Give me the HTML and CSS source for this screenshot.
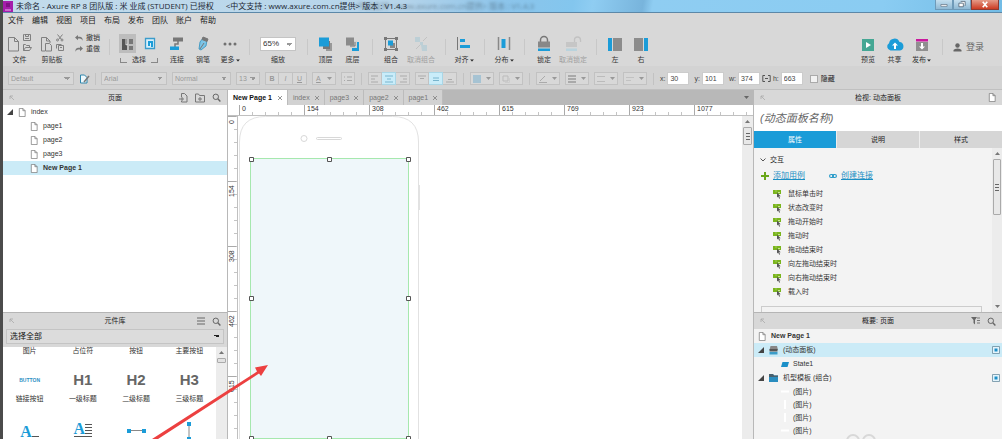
FILE: index.html
```html
<!DOCTYPE html>
<html lang="zh-CN">
<head>
<meta charset="utf-8">
<title>未命名 - Axure RP 8</title>
<link rel="stylesheet" href="styles.css">
</head>
<body>
<svg class="defs" aria-hidden="true">
  <symbol id="page" viewBox="0 0 8 10"><path d="M1 .5h4L7.5 3v6.5H1zM5 .5V3h2.5" fill="#fff" stroke="#777" stroke-width=".8"/></symbol>
  <symbol id="search" viewBox="0 0 9 9"><circle cx="3.8" cy="3.8" r="2.7" fill="none" stroke="#666"/><path d="M5.8 5.8 8.4 8.4" stroke="#666" stroke-width="1.4"/></symbol>
  <symbol id="pin" viewBox="0 0 6 6"><path d="M1 4V1h3M1 1l4 4" fill="none" stroke="#aaa" stroke-width=".8"/></symbol>
  <symbol id="tri" viewBox="0 0 6 6"><path d="M6 0v6H0z" fill="#444"/></symbol>
  <symbol id="event" viewBox="0 0 9 9"><path d="M0 0h8v4H0z" fill="#7ab51d"/><path d="M3 .5v1M5 2.500h2" stroke="#d9efb0" stroke-width=".8"/><path d="M4 2.500v5l1.200-1 1 2.200.9-.5-1-2h1.600z" fill="#555"/></symbol>
  <symbol id="close" viewBox="0 0 6 6"><path d="M1 1l4 4M5 1 1 5" stroke="#888" stroke-width=".9"/></symbol>
  <symbol id="state" viewBox="0 0 8 8"><path d="M.5.5h7v7h-7z" fill="#e4f4fb" stroke="#6a8da0" stroke-width=".8"/><path d="M2.500 2.500h3v3h-3z" fill="#1b8fc8"/></symbol>
  <symbol id="up" viewBox="0 0 5 3"><path d="M0 3 2.500 0 5 3z" fill="#777"/></symbol>
  <symbol id="down" viewBox="0 0 5 3"><path d="M0 0h5L2.500 3z" fill="currentColor"/></symbol>
</svg>

<div class="app">
  <header class="titlebar">
    <svg class="logo" viewBox="0 0 10 11"><path d="M0 0h10v11H0z" fill="#a51dab"/><path d="M2 9h6" stroke="#efb4f0"/><path d="M3 2h4v4H3z" fill="#7f1286"/></svg>
    <h1>未命名 - Axure RP 8 团队版 : 米 业成 (STUDENT) 已授权</h1>
    <span class="support">&lt;中文支持 : www.axure.com.cn提供&gt; 版本 : V1.4.3</span>
    <div class="winbtns">
      <button class="win" aria-label="最小化"><svg viewBox="0 0 18 10"><path d="M5.500 5h7v2h-7z" fill="#fff" stroke="#567" stroke-width=".7"/></svg></button>
      <button class="win" aria-label="还原"><svg viewBox="0 0 18 10"><path d="M7.500 1.500h5v5M5.500 3.500h5v4h-5z" fill="#fff" stroke="#456" stroke-width=".8"/></svg></button>
      <button class="win shut" aria-label="关闭"><svg viewBox="0 0 28 10"><path d="m11.500 2 5 6m0-6-5 6" stroke="#fff" stroke-width="1.800"/></svg></button>
    </div>
  </header>

  <nav class="menu">
    <button>文件</button><button>编辑</button><button>视图</button><button>项目</button><button>布局</button><button>发布</button><button>团队</button><button>账户</button><button>帮助</button>
  </nav>

  <div class="toolbar">
    <button class="tool"><svg width="26" height="20" viewBox="0 0 26 20" fill="none" stroke="#808080"><path d="M1.500 3.500h6l4 4v9.500h-10zM7.500 3.500v4h4M17.500.500h6v6h-7v-6zM18.500.500v2h3v-2M18 4.500h4M16.500 16.500v-6h2l1 1h3v2M16.500 16.500l2-3h6l-2 3z"/></svg><span>文件</span></button>
    <button class="tool"><svg width="26" height="20" viewBox="0 0 26 20" fill="none" stroke="#808080"><path d="M6 17H2.500V3.500h5l3.500 3.500v2M7.500 3.500v3.500H11M6.500 9.500h4l2 2V17h-6zM18.500.500l4 5M23.500.500l-4 5"/><circle cx="18.500" cy="6" r="1"/><circle cx="23" cy="6" r="1"/><path d="M17.500 14.500v-4h5M19.500 11.500h5v5h-5zM21 13.500h2"/></svg><span>剪贴板</span></button>
    <div class="undo">
      <button><svg width="8" height="7" viewBox="0 0 8 7"><path d="M0 2.500 3 0v1.800h2q3 .5 2.500 4Q7 4 5 3.600H3v1.600z" fill="#777"/></svg>撤销</button>
      <button><svg width="8" height="7" viewBox="0 0 8 7"><path d="M8 2.500 5 0v1.800H3Q0 2.300.5 5.800 1 4 3 3.600h2v1.600z" fill="#777"/></svg>重做</button>
    </div>
    <i class="sep"></i>
    <button class="tool"><svg width="42" height="20" viewBox="0 0 42 20"><path d="M1 0h17v19H1z" fill="#bdbdbd"/><path d="M4 5h5v11H4z" fill="#555"/><path d="M11 5h4v5h-4zM11 12h4v4h-4z" fill="#777"/><path d="M8 5v6l2-1" fill="none" stroke="#ddd"/><path d="M27.500 4.500h9v10h-9z" fill="#d9f0fb" stroke="#3b9ccb" stroke-width="1.300"/><path d="M30 7h5v6h-2V9h-1v3h-2z" fill="#1b9cd8"/></svg><span class="pick">选择</span></button>
    <button class="tool"><svg width="16" height="20" viewBox="0 0 16 20"><path d="M4 3.500h10v4H4z" fill="#777"/><path d="M9 7v3H6v3" fill="none" stroke="#777" stroke-width="1.500"/><path d="M1 12.500h9v3.500H1z" fill="#1b9cd8"/></svg><span>连接</span></button>
    <button class="tool"><svg width="16" height="20" viewBox="0 0 16 20"><path d="m8 4 4 2-1 6-5 4-2-1 1-7z" fill="#7cc4e6" stroke="#2d8fbd" stroke-width=".8"/><path d="m8 3 5 2-1 2.500-5-2zM5 15l4-6" fill="#777" stroke="#777"/></svg><span>钢笔</span></button>
    <button class="tool"><svg width="16" height="20" viewBox="0 0 16 20" fill="#707070"><circle cx="3" cy="10" r="1.500"/><circle cx="8" cy="10" r="1.500"/><circle cx="13" cy="10" r="1.500"/></svg><span>更多<svg width="4" height="3" viewBox="0 0 5 3"><use href="#down"/></svg></span></button>
    <i class="sep"></i>
    <div class="tool"><select class="zoom" id="zoom"><option>65%</option></select><label for="zoom">缩放</label></div>
    <i class="sep"></i>
    <button class="tool"><svg width="16" height="20" viewBox="0 0 16 20"><path d="M8 9h6v8H8z" fill="#999"/><path d="M5 7h7v8H5z" fill="#777"/><path d="M1 3.500h10v9H1z" fill="#1b9cd8"/></svg><span>顶层</span></button>
    <button class="tool"><svg width="16" height="20" viewBox="0 0 16 20"><path d="M8 8h6v9H7v-4h1z" fill="#1b9cd8"/><path d="M5 7h7v7H5z" fill="#d0d0d0"/><path d="M1 3.500h8v8H1z" fill="#8b8b8b"/><path d="M5 12h5V8" fill="none" stroke="#777"/></svg><span>底层</span></button>
    <i class="sep"></i>
    <button class="tool"><svg width="16" height="20" viewBox="0 0 16 20"><path d="M2.500 4.500h11v11h-11z" fill="none" stroke="#777"/><path d="M1 3h3v3H1zM12 3h3v3h-3zM1 14h3v3H1zM12 14h3v3h-3z" fill="#777"/><path d="M7 9h5v5H7z" fill="#888"/><path d="M5 6.500h5v5H5z" fill="#1b9cd8"/></svg><span>组合</span></button>
    <button class="tool off"><svg width="16" height="20" viewBox="0 0 16 20"><path d="M2 3h5v5h3v3H7V8H2zM8 11h6v6H9z" fill="#bccfd6"/><path d="m10 7 4-4M3 15l4-4" stroke="#c2c2c2"/></svg><span>取消组合</span></button>
    <i class="sep"></i>
    <button class="tool"><svg width="16" height="20" viewBox="0 0 16 20"><path d="M1.500 3v13" stroke="#777"/><path d="M4 5h5v3H4zM4 11h10v3H4z" fill="#1b9cd8"/></svg><span>对齐<svg width="4" height="3" viewBox="0 0 5 3"><use href="#down"/></svg></span></button>
    <i class="sep"></i>
    <button class="tool"><svg width="16" height="20" viewBox="0 0 16 20"><path d="M2.500 3v13M13.500 3v13" stroke="#888" stroke-width="1.500"/><path d="M5.500 5h4v9h-4z" fill="#1b9cd8"/></svg><span>分布<svg width="4" height="3" viewBox="0 0 5 3"><use href="#down"/></svg></span></button>
    <i class="sep"></i>
    <button class="tool"><svg width="16" height="20" viewBox="0 0 16 20"><path d="M4.500 9V6a3.500 3.500 0 0 1 7 0v3" fill="none" stroke="#777" stroke-width="1.500"/><path d="M2 7.500h12v6H2z" fill="#888"/><path d="M2 14.500h12V17H2z" fill="#1b9cd8"/></svg><span>锁定</span></button>
    <button class="tool off"><svg width="18" height="20" viewBox="0 0 18 20"><path d="M10.500 8V6a3 3 0 0 1 6 0v2" fill="none" stroke="#c2c2c2" stroke-width="1.300"/><path d="M2 8h11v5H2z" fill="#c6c6c6"/><path d="M2 14.500h11V17H2z" fill="#b9d3dd"/></svg><span>取消锁定</span></button>
    <i class="sep"></i>
    <button class="tool"><svg width="16" height="20" viewBox="0 0 16 20"><path d="M1 4h4v13H1z" fill="#1b9cd8"/><path d="M6 4h9v13H6z" fill="#8c8c8c"/></svg><span>左</span></button>
    <button class="tool"><svg width="16" height="20" viewBox="0 0 16 20"><path d="M11 4h4v13h-4z" fill="#1b9cd8"/><path d="M1 4h9v13H1z" fill="#8c8c8c"/></svg><span>右</span></button>
    <i></i>
    <button class="tool"><svg width="16" height="20" viewBox="0 0 16 20"><path d="M2 5h12v12H2z" fill="#45a794"/><path d="m6 8 5 3-5 3z" fill="#fff"/></svg><span>预览</span></button>
    <button class="tool"><svg width="18" height="20" viewBox="0 0 18 20"><path d="M4.500 16.500A4 4 0 0 1 3 9.200 5.500 5.500 0 0 1 13.500 8 4.300 4.300 0 0 1 14 16.500z" fill="#1b9cd8"/><path d="m9 8.500 3 3h-2V15H8v-3.500H6z" fill="#fff"/></svg><span>共享</span></button>
    <button class="tool"><svg width="16" height="20" viewBox="0 0 16 20"><path d="M2 5h12v2.500H2z" fill="#c9199d"/><path d="M2 8h12v9H2z" fill="#8f8f8f"/><path d="m8 15.500-3-3h2V9h2v3.500h2z" fill="#fff"/></svg><span>发布<svg width="4" height="3" viewBox="0 0 5 3"><use href="#down"/></svg></span></button>
    <i class="sep"></i>
    <button class="login"><svg width="9" height="9" viewBox="0 0 9 9" fill="#666"><circle cx="4.500" cy="2.500" r="2.200"/><path d="M.5 8.500V7q1-1.500 4-1.500T8.500 7v1.500z"/></svg>登录</button>
  </div>

  <div class="stylebar">
    <select class="w65" aria-label="样式"><option>Default</option></select>
    <button class="plain" aria-label="编辑样式"><svg width="11" height="10" viewBox="0 0 11 10"><path d="M1.500 1h4L8 3.500V9H1.500z" fill="#eef8fc" stroke="#2f86ad"/><path d="m5 8 5-6" stroke="#777" stroke-width="1.500"/></svg></button>
    <i class="bar"></i>
    <select class="w65" aria-label="字体"><option>Arial</option></select>
    <select class="w58" aria-label="字形"><option>Normal</option></select>
    <select class="w24" aria-label="字号"><option>13</option></select>
    <div class="set"><button><b>B</b></button><button><em>I</em></button><button><u>U</u></button></div>
    <button class="drop"><u>A</u><svg width="5" height="3"><use href="#down"/></svg></button>
    <button class="one" aria-label="列表"><svg width="8" height="8" viewBox="0 0 8 8" stroke="#aaa"><path d="M0 2h1M3 2h5M0 5.500h1M3 5.500h5"/></svg></button>
    <i class="bar wide"></i>
    <div class="set">
      <button aria-label="左对齐"><svg width="8" height="8" viewBox="0 0 8 8" stroke="#aaa"><path d="M0 1h7M0 4h4M0 7h7"/></svg></button>
      <button class="on" aria-label="居中"><svg width="8" height="8" viewBox="0 0 8 8" stroke="#78b5ce"><path d="M0 1h8M2 4h4M0 7h8"/></svg></button>
      <button aria-label="右对齐"><svg width="8" height="8" viewBox="0 0 8 8" stroke="#aaa"><path d="M1 1h7M4 4h4M1 7h7"/></svg></button>
    </div>
    <div class="set">
      <button aria-label="顶部"><svg width="8" height="8" viewBox="0 0 8 8" stroke="#aaa"><path d="M0 1h8M2 3.500h4"/></svg></button>
      <button class="on" aria-label="中部"><svg width="8" height="8" viewBox="0 0 8 8" stroke="#78b5ce"><path d="M1 3h6M1 5.500h6"/></svg></button>
      <button aria-label="底部"><svg width="8" height="8" viewBox="0 0 8 8" stroke="#aaa"><path d="M2 4.500h4M0 7h8"/></svg></button>
    </div>
    <i class="bar wide"></i>
    <button class="drop" aria-label="填充"><svg width="8" height="8"><path d="M0 0h8v8H0z" fill="#a6c3d3"/></svg><svg width="5" height="3"><use href="#down"/></svg></button>
    <button class="drop" aria-label="阴影"><svg width="8" height="8"><path d="M1 1h5v5H1z" fill="none" stroke="#bbb"/><path d="M3 7.500h4.500V3" fill="none" stroke="#ccc"/></svg><svg width="5" height="3"><use href="#down"/></svg></button>
    <i class="bar wide"></i>
    <button class="drop" aria-label="线色"><svg width="8" height="8"><path d="m1 6 5-5M0 7.500h8" stroke="#aaa"/></svg><svg width="5" height="3"><use href="#down"/></svg></button>
    <button class="drop" aria-label="线宽"><svg width="8" height="8"><path d="M0 1h8M0 4h8M0 7h8" stroke="#999" stroke-width="1.500"/></svg><svg width="5" height="3"><use href="#down"/></svg></button>
    <button class="drop" aria-label="线型"><svg width="8" height="8"><path d="M0 1.500h8M0 6.500h8" stroke="#bbb"/></svg><svg width="5" height="3"><use href="#down"/></svg></button>
    <button class="drop" aria-label="箭头"><svg width="8" height="8"><path d="M0 2.500h8M0 5.500h5" stroke="#c2c2c2"/></svg><svg width="5" height="3"><use href="#down"/></svg></button>
    <i class="bar wide"></i>
    <label class="num">x:<input value="30"></label>
    <label class="num">y:<input value="101"></label>
    <label class="num">w:<input value="374"></label>
    <label class="num tight"><svg width="9" height="7" viewBox="0 0 9 7"><path d="M3 .5H.8v6H3M6 .5h2.200v6H6M3 3.500h3" fill="none" stroke="#555"/></svg>h:<input value="663"></label>
    <label class="hide"><input type="checkbox">隐藏</label>
  </div>

  <main class="work">
    <aside class="left">
      <section class="pages">
        <div class="head"><svg width="6" height="6"><use href="#pin"/></svg><h2>页面</h2>
          <span class="acts"><button aria-label="添加页面"><svg width="9" height="10" viewBox="0 0 9 10" fill="none" stroke="#777"><path d="M2.500 4V.5h3l2.500 2.500v6H2.500V8M0 6h5M3 4v4"/></svg></button><button aria-label="添加文件夹"><svg width="10" height="10" viewBox="0 0 10 10" fill="none" stroke="#777"><path d="M.5 9V1h3l1 1.500h5V9zM3 6h4M5 4v4"/></svg></button><button aria-label="搜索"><svg width="9" height="9"><use href="#search"/></svg></button></span>
        </div>
        <ul class="tree">
          <li class="root"><svg width="6" height="6"><use href="#tri"/></svg><svg width="8" height="9"><use href="#page"/></svg>index</li>
          <li><svg width="8" height="9"><use href="#page"/></svg>page1</li>
          <li><svg width="8" height="9"><use href="#page"/></svg>page2</li>
          <li><svg width="8" height="9"><use href="#page"/></svg>page3</li>
          <li class="cur"><svg width="8" height="9"><use href="#page"/></svg>New Page 1</li>
        </ul>
      </section>
      <section class="library">
        <div class="head"><svg width="6" height="6"><use href="#pin"/></svg><h2>元件库</h2>
          <span class="acts"><button aria-label="菜单"><svg width="8" height="8" viewBox="0 0 8 8" stroke="#666"><path d="M0 1h8M0 4h8M0 7h8"/></svg></button><button aria-label="搜索"><svg width="9" height="9"><use href="#search"/></svg></button></span>
        </div>
        <div class="chooser"><select aria-label="元件库"><option>选择全部</option></select></div>
        <div class="shelf">
          <div class="widgets">
            <span>图片</span><span>占位符</span><span>按钮</span><span>主要按钮</span>
            <b class="link">BUTTON</b><b>H1</b><b>H2</b><b>H3</b>
            <span>链接按钮</span><span>一级标题</span><span>二级标题</span><span>三级标题</span>
            <div class="glyph"><strong>A</strong><svg width="7" height="14"><path d="M0 12.500h7" stroke="#555"/></svg></div>
            <div class="para"><div class="glyph"><strong>A</strong><svg width="7" height="12" stroke="#555"><path d="M0 1.500h7M0 4.500h7M0 7.500h7M0 10.500h7"/></svg></div><svg width="18" height="6" stroke="#555"><path d="M0 1.500h18M0 4.500h18"/></svg></div>
            <svg width="20" height="18" viewBox="0 0 20 18"><path d="M3 8.500h14" stroke="#888"/><path d="M1 7h4v4H1zM16 7h4v4h-4z" fill="#1b9cd8"/></svg>
            <svg width="8" height="20" viewBox="0 0 8 20"><path d="M4 3v14" stroke="#888"/><path d="M2 1h4v4H2zM2 16h4v4H2z" fill="#1b9cd8"/></svg>
          </div>
          <div class="scroll"><svg width="5" height="3"><use href="#up"/></svg><i class="thumb small"></i></div>
        </div>
      </section>
    </aside>

    <section class="center">
      <div class="tabs">
        <button class="sel">New Page 1<svg width="6" height="6"><use href="#close"/></svg></button>
        <button>index<svg width="6" height="6"><use href="#close"/></svg></button>
        <button>page3<svg width="6" height="6"><use href="#close"/></svg></button>
        <button>page2<svg width="6" height="6"><use href="#close"/></svg></button>
        <button>page1<svg width="6" height="6"><use href="#close"/></svg></button>
        <svg class="more" width="5" height="3"><use href="#down"/></svg>
      </div>
      <div class="hruler"><span>0</span><span>154</span><span>308</span><span>462</span><span>615</span><span>769</span><span>923</span><span>1077</span></div>
      <div class="stage">
        <div class="vruler"><span>0</span><span>154</span><span>308</span><span>462</span><span>615</span></div>
        <svg class="canvas" width="190" height="323" viewBox="0 0 190 323">
          <path d="M1.500 340V26q0-25.500 26-25.500h127q26 0 26 25.500v314M181.500 69v25" fill="none" stroke="#e2e2e2"/>
          <circle cx="66" cy="22.500" r="3" fill="none" stroke="#d8d8d8"/>
          <rect x="78.500" y="21.500" width="25" height="2" rx="1" fill="none" stroke="#d8d8d8"/>
          <path d="M12.500 42.500h158v280h-158z" fill="#eff7fa" stroke="#a6e8ae"/>
          <g fill="#fff" stroke="#555"><path d="M11.500 41.500h4v4h-4zM89.500 41.500h4v4h-4zM168.500 41.500h4v4h-4zM11.500 180.500h4v4h-4zM168.500 180.500h4v4h-4zM11.500 320.500h4v4h-4zM89.500 320.500h4v4h-4zM168.500 320.500h4v4h-4z"/></g>
        </svg>
        <div class="scroll"><svg width="5" height="3"><use href="#up"/></svg><i class="thumb"></i></div>
      </div>
    </section>

    <aside class="right">
      <section class="inspect">
        <div class="head"><svg width="6" height="6"><use href="#pin"/></svg><h2>检视: 动态面板</h2><span class="acts"><svg width="8" height="9"><use href="#page"/></svg></span></div>
        <input class="name" aria-label="名称" placeholder="(动态面板名称)">
        <div class="modes"><button class="sel">属性</button><button>说明</button><button>样式</button></div>
        <div class="props">
          <div class="list">
            <h3><svg width="6" height="4" viewBox="0 0 6 4"><path d="m.5.500 2.500 2.500L5.500.500" fill="none" stroke="#555"/></svg>交互</h3>
            <div class="links">
              <svg width="8" height="8"><path d="M4 0v8M0 4h8" stroke="#6aa71a" stroke-width="2"/></svg><a href="#case">添加用例</a>
              <svg width="8" height="6" viewBox="0 0 8 6" fill="none" stroke="#2a9bc9" stroke-width="1.200"><rect x=".6" y="1.500" width="4" height="3" rx="1.500"/><rect x="3.400" y="1.500" width="4" height="3" rx="1.500"/></svg><a href="#link">创建连接</a>
            </div>
            <ul class="events">
              <li><svg width="9" height="9"><use href="#event"/></svg>鼠标单击时</li>
              <li><svg width="9" height="9"><use href="#event"/></svg>状态改变时</li>
              <li><svg width="9" height="9"><use href="#event"/></svg>拖动开始时</li>
              <li><svg width="9" height="9"><use href="#event"/></svg>拖动时</li>
              <li><svg width="9" height="9"><use href="#event"/></svg>拖动结束时</li>
              <li><svg width="9" height="9"><use href="#event"/></svg>向左拖动结束时</li>
              <li><svg width="9" height="9"><use href="#event"/></svg>向右拖动结束时</li>
              <li><svg width="9" height="9"><use href="#event"/></svg>载入时</li>
            </ul>
            <div class="foot"></div>
          </div>
          <div class="scroll slim"><svg width="5" height="3"><use href="#up"/></svg><i class="thumb tall"></i><svg class="end" width="5" height="3"><use href="#down"/></svg></div>
        </div>
      </section>
      <section class="outline">
        <div class="head"><svg width="6" height="6"><use href="#pin"/></svg><h2>概要: 页面</h2><span class="acts"><button aria-label="筛选"><svg width="9" height="8" viewBox="0 0 9 8"><path d="M0 0h6L4 3v4.500L2.500 6V3z" fill="#666"/><path d="M6 1h3M6 3.500h3M6 6h3" stroke="#777"/></svg></button><button aria-label="搜索"><svg width="9" height="9"><use href="#search"/></svg></button></span></div>
        <ul class="layers">
          <li class="top"><svg width="8" height="9"><use href="#page"/></svg><b>New Page 1</b></li>
          <li class="cur"><svg width="6" height="6"><use href="#tri"/></svg><svg width="9" height="9" viewBox="0 0 9 9"><path d="M1.500 0H8l1 4H.5z" fill="#888"/><path d="M.5 3h8v2.500h-8z" fill="#555"/><path d="M.5 6h8v2.500h-8z" fill="#3b9cc8"/></svg>(动态面板)<svg class="flag" width="8" height="8"><use href="#state"/></svg></li>
          <li class="kid"><svg width="8" height="5"><path d="M1.500 0H8L6.500 5H0z" fill="#1b8fc8"/></svg>State1</li>
          <li><svg width="6" height="6"><use href="#tri"/></svg><svg width="9" height="8" viewBox="0 0 9 8"><path d="M0 0h4l1 1.500h4V8H0z" fill="#2a8dbf"/><path d="M0 0h4l1 1.500h4V3H0z" fill="#48606e"/></svg>机型模板 (组合)<svg class="flag" width="8" height="8"><use href="#state"/></svg></li>
          <li class="kid pic"><svg width="8" height="9"><path d="M0 4.500h8" stroke="#fff" stroke-width="2"/></svg>(图片)</li>
          <li class="kid pic"><svg width="8" height="9"><path d="M4 0v9" stroke="#fff" stroke-width="2"/></svg>(图片)</li>
          <li class="kid pic"><svg width="8" height="9"><path d="M4 0v9" stroke="#fff" stroke-width="2"/></svg>(图片)</li>
          <li class="kid pic"><svg width="8" height="9"><path d="M0 4.500h8" stroke="#fff" stroke-width="2"/></svg>(图片)</li>
        </ul>
        <svg class="rings" width="32" height="6" viewBox="0 0 32 6" fill="none" stroke="#d8d8d8" stroke-width="2"><circle cx="8" cy="8" r="6"/><circle cx="24" cy="8" r="6"/></svg>
      </section>
    </aside>
  </main>
  <svg class="arrow" width="120" height="78" viewBox="0 0 120 78"><path d="M0 78 105 10.500 103 6.500 116 4 109 15 107 12.500 6 78z" fill="#ec4040"/></svg>
</div>
</body>
</html>
```
FILE: styles.css
```css
* { box-sizing: border-box; }
body, h1, h2, h3, ul { margin: 0; padding: 0; }
body { font: 7px/10px "Liberation Sans", "Noto Sans CJK SC", sans-serif; color: #333; background: #fff; }
ul { list-style: none; }
button, input, select { font: inherit; color: inherit; margin: 0; padding: 0; border: 0; background: none; border-radius: 0; }
select { appearance: none; }
svg { display: block; flex: none; }
.defs { display: none; }

.app { position: relative; display: flex; flex-direction: column; height: 100vh; border-left: 3px solid #4b4b4b; background: #d8d8d8; overflow: hidden; }

.titlebar { display: flex; align-items: center; height: 13px; flex: none; color: #1c2733; border-bottom: 1px solid #5c88a8; font: 8px/12px "Open Sans", "Noto Sans CJK SC", sans-serif; overflow: hidden; background: linear-gradient(100deg, #c3dcec 0, #b5d4ea 40%, #8cc4ea 50%, #83c6ee 57%, #8fcdf2 59%, #78b4dc 64%, #8fcdf2 65%, #8accf2 88%, #72bce6 100%); }
.logo { width: 10px; height: 11px; margin-right: 3px; }
.titlebar h1 { font: inherit; white-space: nowrap; }
.support { margin-left: 12px; white-space: nowrap; text-shadow: 127px 0 3px #1c273366; }
.winbtns { display: flex; align-self: flex-start; margin: 0 3px 0 auto; }
.win { width: 18px; height: 10px; border: 1px solid #6f9ab8; border-top: 0; background: linear-gradient(#c5dfef, #8fb9d4); }
.win svg { width: 100%; height: 100%; }
.win.shut { width: 28px; border-color: #8d3b32; background: linear-gradient(#e59b88, #cc3b22); }

.menu { display: flex; gap: 8px; padding: 0 5px; height: 15px; flex: none; font-size: 8px; color: #222; }
.menu button { width: 16px; white-space: nowrap; }

.toolbar { display: grid; flex: none; height: 38px; align-items: center; grid-template-columns: 26px 39px 36px 10px 50px 26px 26px 28px 10px 48px 10px 27px 27px 12px 26px 34px 14px 24px 16px 24px 16px 24px 34px 12px 26px 26px 1fr 26px 27px 27px 14px 53px; }
.toolbar { grid-template-columns: 33px 32px 36px 10px 50px 26px 26px 28px 10px 48px 10px 27px 27px 12px 26px 34px 14px 24px 16px 24px 16px 24px 34px 12px 26px 26px 1fr 26px 27px 27px 14px 53px; }
.tool { display: flex; flex-direction: column; align-items: center; justify-content: flex-end; gap: 1px; height: 36px; white-space: nowrap; color: #333; }
.tool span, .tool label { display: flex; align-items: center; gap: 1px; line-height: 10px; }
.tool.off { color: #a0a0a0; }
.sep { justify-self: center; width: 1px; height: 16px; background: #c8c8c8; }
.tool .pick { gap: 5px; }
.pick::before, .pick::after { content: ""; width: 6px; height: 4px; border: solid #888; border-width: 0 0 1px 1px; }
.pick::after { border-width: 0 1px 1px 0; }
.undo { display: flex; flex-direction: column; gap: 1px; align-self: start; padding: 5px 0 0 7px; }
.undo button { display: flex; align-items: center; gap: 3px; white-space: nowrap; color: #333; }
.login { display: flex; align-items: center; gap: 4px; padding-left: 4px; font-size: 9px; color: #666; }

select { background: linear-gradient(45deg, #0000 50%, #999 50%) right 6px center / 3px 3px no-repeat, linear-gradient(-45deg, #0000 50%, #999 50%) right 3px center / 3px 3px no-repeat; }
.tool .zoom { width: 36px; height: 14px; margin-bottom: 3px; padding-left: 2px; border: 1px solid #c4c4c4; font-size: 8px; background-color: #fff; }

.stylebar { display: flex; align-items: center; flex: none; gap: 5px; height: 24px; padding: 2px 5px 0; color: #999; background: #d3d3d3; border-bottom: 1px solid #c0c0c0; }
.stylebar select, .set button, .drop, .one { height: 13px; border: 1px solid #c2c2c2; background-color: #d8d8d8; }
.stylebar select { padding-left: 2px; }
.w65 { width: 66px; }
.w58 { width: 59px; }
.w24 { width: 24px; }
.bar { width: 1px; height: 12px; background: #c2c2c2; }
.bar.wide { margin: 0 1px; }
.set { display: flex; }
.set button { display: grid; place-items: center; width: 14px; }
.set button + button { border-left: 0; }
.set .on { background: #c9ecf9; border-color: #a9d6e6; }
.drop { display: flex; align-items: center; justify-content: space-around; width: 24px; }
.one { display: grid; place-items: center; width: 14px; }
.num { display: flex; align-items: center; gap: 2px; color: #444; }
.num input { width: 22px; height: 13px; padding-left: 2px; background: #fff; border: 1px solid #ccc; }
.num.tight { margin-left: -3px; }
.hide { display: flex; align-items: center; gap: 3px; margin-left: 2px; color: #222; }
.hide input { appearance: none; width: 8px; height: 8px; background: #f2f2f2; border: 1px solid #aaa; }

.work { display: grid; grid-template-columns: 224px minmax(0, 1fr) 248px; gap: 1px; flex: 1; min-height: 0; background: #b8b8b8; }
.left, .right { display: grid; min-height: 0; gap: 1px; grid-template-rows: minmax(0, 1fr) 126px; background: #b5b5b5; }
.left section, .right section { min-height: 0; overflow: hidden; }
.head { display: grid; grid-template-columns: 40px 1fr 40px; align-items: center; height: 15px; padding: 0 6px; background: #d8d8d8; }
.head h2 { font: inherit; text-align: center; color: #222; }
.acts { display: flex; justify-content: flex-end; gap: 7px; }
.pages, .library { background: #fff; }
.tree li { display: flex; align-items: center; gap: 5px; height: 14px; padding-left: 27px; }
.tree .root { padding-left: 4px; }
.cur { background: #cbebf7; }
.tree .cur { font-weight: bold; }

.library, .outline { display: flex; flex-direction: column; }
.library .head, .outline .head { height: 16px; flex: none; }
.chooser { flex: none; padding: 0 3px 3px; background: #d8d8d8; }
.chooser select { width: 100%; height: 15px; padding-left: 3px; border: 1px solid #c4c4c4; font-size: 8px; color: #111; background: linear-gradient(45deg, #0000 50%, #222 50%) right 6px center / 3px 3px no-repeat, linear-gradient(-45deg, #0000 50%, #222 50%) right 3px center / 3px 3px no-repeat, #dcdcdc; }
.shelf { display: flex; flex: 1; min-height: 0; }
.widgets { display: grid; flex: 1; grid-template-columns: repeat(4, 1fr); grid-template-rows: 10px 38px 10px 54px; align-items: center; justify-items: center; margin-top: -1px; }
.widgets span { white-space: nowrap; }
.widgets b { padding-top: 10px; font-size: 15px; color: #666; }
.widgets .link { font-size: 5px; color: #2f8fc4; }
.glyph { display: flex; align-items: flex-end; }
.glyph strong { font: bold 16px/13px "Liberation Serif", serif; color: #1b9cd8; }
.scroll { display: flex; flex-direction: column; align-items: center; gap: 4px; width: 11px; padding-top: 4px; background: #ececec; }
.thumb { width: 9px; height: 18px; border: 1px solid #aaa; border-radius: 1px; background: linear-gradient(#666, #666) center 5px / 4px 1px no-repeat, linear-gradient(#666, #666) center 8px / 4px 1px no-repeat, linear-gradient(#666, #666) center 11px / 4px 1px no-repeat, #e8e8e8; }
.thumb.small { height: 5px; background: #e2e2e2; }

.center { display: flex; flex-direction: column; min-height: 0; background: #fff; }
.tabs { display: flex; height: 15px; flex: none; background: #b8b8b8; }
.tabs button { display: flex; align-items: center; gap: 4px; padding: 0 4px 0 5px; color: #777; background: #d2d2d2; border-right: 1px solid #bcbcbc; white-space: nowrap; }
.tabs .sel { gap: 5px; color: #111; font-weight: bold; background: #fff; }
.more { margin: 6px 4px 0 auto; color: #666; }
.hruler { display: flex; flex: none; height: 11px; padding-left: 11px; overflow: hidden; border-bottom: 1px solid #c0c0c0; background: repeating-linear-gradient(90deg, #c4c4c4 0 1px, #0000 1px 13px) 11px 100% / 100% 3px no-repeat; }
.hruler span { flex: 0 0 65px; height: 11px; padding-left: 2px; line-height: 8px; border-left: 1px solid #aaa; }
.stage { display: flex; flex: 1; min-height: 0; overflow: hidden; }
.vruler { flex: none; width: 10px; border-right: 1px solid #c0c0c0; background: repeating-linear-gradient(#c4c4c4 0 1px, #0000 1px 13px) right top / 3px 100% no-repeat; }
.vruler span { display: flex; justify-content: flex-end; height: 65px; padding-bottom: 3px; writing-mode: vertical-rl; transform: rotate(180deg); line-height: 8px; border-bottom: 1px solid #aaa; }
.canvas { overflow: hidden; }
.stage .scroll { margin-left: auto; }

.inspect { display: flex; flex-direction: column; background: #f3f3f3; }
.inspect .head { flex: none; }
.name { flex: none; width: 100%; height: 26px; padding-left: 6px; font-size: 11px; font-style: italic; background: #fff; }
.name::placeholder { color: #666; opacity: 1; }
.modes { display: grid; grid-template-columns: repeat(3, 1fr); gap: 1px; flex: none; height: 17px; background: #eee; }
.modes button { background: #d6d6d6; color: #222; }
.modes .sel { background: #1b9cd8; color: #fff; }
.props { display: flex; flex: 1; min-height: 0; overflow: hidden; }
.list { display: flex; flex-direction: column; flex: 1; }
.list h3 { display: flex; align-items: center; gap: 4px; height: 14px; margin-top: 5px; padding-left: 6px; font: inherit; color: #222; }
.links { display: flex; align-items: center; gap: 4px; height: 20px; padding-left: 7px; font-size: 8px; }
.links a { color: #1b8fc4; }
.links a + svg { margin-left: 20px; }
.events { padding: 2px 0 0 19px; }
.events li { display: flex; align-items: center; gap: 6px; height: 14px; }
.foot { flex: none; height: 6px; margin: 7px 10px 0 7px; border: 1px solid #ccc; border-bottom: 0; }
.slim { width: 10px; padding: 4px 0; color: #777; }
.thumb.tall { width: 8px; height: 56px; background-position: center 24px, center 27px, center 30px, 0 0; }
.end { margin-top: auto; }

.outline { position: relative; background: #f3f3f3; }
.layers li { display: flex; align-items: center; gap: 5px; height: 14px; padding: 0 2px 0 4px; }
.layers .kid { gap: 4px; padding-left: 27px; }
.layers .pic { height: 13px; }
.flag { margin-left: auto; }
.rings { position: absolute; right: 125px; bottom: 0; }
.arrow { position: absolute; left: 149px; bottom: 0; pointer-events: none; }
```
